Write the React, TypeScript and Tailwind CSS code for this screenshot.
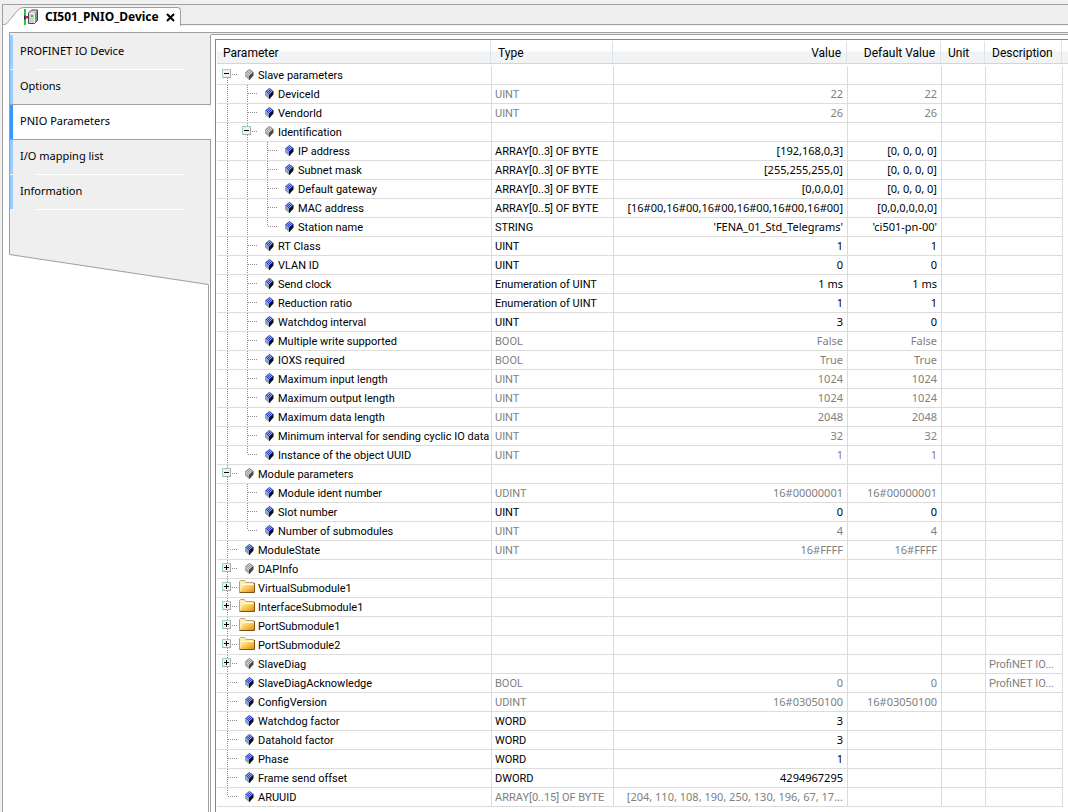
import { useState } from "react";

type Icon = "blue" | "gray" | "folder";

interface Node {
  name: string;
  icon?: Icon;
  type?: string;
  value?: string;
  def?: string;
  description?: string;
  readOnly?: boolean;
  expandable?: boolean;
  children?: Node[];
}

const ro = (name: string, type: string, value: string, def = value): Node => ({ name, type, value, def, readOnly: true });
const rw = (name: string, type: string, value: string, def = value): Node => ({ name, type, value, def });
const folder = (name: string): Node => ({ name, icon: "folder", expandable: true });

const TREE: Node[] = [
  {
    name: "Slave parameters",
    icon: "gray",
    children: [
      ro("DeviceId", "UINT", "22"),
      ro("VendorId", "UINT", "26"),
      {
        name: "Identification",
        icon: "gray",
        children: [
          rw("IP address", "ARRAY[0..3] OF BYTE", "[192,168,0,3]", "[0, 0, 0, 0]"),
          rw("Subnet mask", "ARRAY[0..3] OF BYTE", "[255,255,255,0]", "[0, 0, 0, 0]"),
          rw("Default gateway", "ARRAY[0..3] OF BYTE", "[0,0,0,0]", "[0, 0, 0, 0]"),
          rw("MAC address", "ARRAY[0..5] OF BYTE", "[16#00,16#00,16#00,16#00,16#00,16#00]", "[0,0,0,0,0,0]"),
          rw("Station name", "STRING", "'FENA_01_Std_Telegrams'", "'ci501-pn-00'"),
        ],
      },
      rw("RT Class", "UINT", "1"),
      rw("VLAN ID", "UINT", "0"),
      rw("Send clock", "Enumeration of UINT", "1 ms"),
      rw("Reduction ratio", "Enumeration of UINT", "1"),
      rw("Watchdog interval", "UINT", "3", "0"),
      ro("Multiple write supported", "BOOL", "False"),
      ro("IOXS required", "BOOL", "True"),
      ro("Maximum input length", "UINT", "1024"),
      ro("Maximum output length", "UINT", "1024"),
      ro("Maximum data length", "UINT", "2048"),
      ro("Minimum interval for sending cyclic IO data", "UINT", "32"),
      ro("Instance of the object UUID", "UINT", "1"),
    ],
  },
  {
    name: "Module parameters",
    icon: "gray",
    children: [
      ro("Module ident number", "UDINT", "16#00000001"),
      rw("Slot number", "UINT", "0"),
      ro("Number of submodules", "UINT", "4"),
    ],
  },
  ro("ModuleState", "UINT", "16#FFFF"),
  { name: "DAPInfo", icon: "gray", expandable: true },
  folder("VirtualSubmodule1"),
  folder("InterfaceSubmodule1"),
  folder("PortSubmodule1"),
  folder("PortSubmodule2"),
  { name: "SlaveDiag", icon: "gray", expandable: true, description: "ProfiNET IO...", readOnly: true },
  { ...ro("SlaveDiagAcknowledge", "BOOL", "0"), description: "ProfiNET IO..." },
  ro("ConfigVersion", "UDINT", "16#03050100"),
  rw("Watchdog factor", "WORD", "3", ""),
  rw("Datahold factor", "WORD", "3", ""),
  rw("Phase", "WORD", "1", ""),
  rw("Frame send offset", "DWORD", "4294967295", ""),
  ro("ARUUID", "ARRAY[0..15] OF BYTE", "[204, 110, 108, 190, 250, 130, 196, 67, 17...", ""),
];

const NAV = ["PROFINET IO Device", "Options", "PNIO Parameters", "I/O mapping list", "Information"];

interface Row {
  node: Node;
  path: string;
  /** For every ancestor level: whether its vertical line runs on past this row. */
  lines: boolean[];
  first: boolean;
  last: boolean;
  open: boolean;
}

function flatten(nodes: Node[], closed: Set<string>, lines: boolean[] = [], prefix = ""): Row[] {
  return nodes.flatMap((node, i) => {
    const path = prefix + "/" + node.name;
    const last = i === nodes.length - 1;
    const open = !!node.children && !closed.has(path);
    const row: Row = { node, path, lines, first: i === 0 && prefix === "", last, open };
    return open ? [row, ...flatten(node.children!, closed, [...lines, !last], path)] : [row];
  });
}

function Dots({ d }: { d: string }) {
  return <path d={d} stroke="#8e8e8e" strokeDasharray="1 1" fill="none" shapeRendering="crispEdges" />;
}

function Guide({ on }: { on: boolean }) {
  return (
    <svg width="20" height="18" className="shrink-0" aria-hidden="true">
      {on && <Dots d="M10.5 0V18" />}
    </svg>
  );
}

function Branch({ row }: { row: Row }) {
  const box = !!row.node.children || !!row.node.expandable;
  return (
    <svg width="20" height="18" className="shrink-0" aria-hidden="true">
      {!row.first && <Dots d="M10.5 0V8" />}
      {!row.last && <Dots d="M10.5 8V18" />}
      <Dots d="M11 8.5H20" />
      {box && (
        <g shapeRendering="crispEdges">
          <rect x="5.5" y="3.5" width="8" height="8" fill="#f0f2f1" stroke="#9fd0cd" />
          <path d="M6 11.5H14M13.5 4V12" stroke="#a3adac" />
          <path d="M7 7.5H12" stroke="#000" />
          {!row.open && <path d="M9.5 5V10" stroke="#000" />}
        </g>
      )}
    </svg>
  );
}

function Diamond({ blue }: { blue: boolean }) {
  return (
    <svg width="9" height="11" viewBox="0 0 9 11" aria-hidden="true">
      <path d="M4.500 0L8.500 3.500L4 8L0 4Z" fill={blue ? "#2334d8" : "#929292"} />
      <path d="M0 3.500L4 7V11L0 7.500Z" fill={blue ? "#8ba2bd" : "#a9a9a9"} />
      <path d="M4 7L8.500 3V6.500L4.500 11H4Z" fill={blue ? "#0c0d12" : "#484848"} />
      <path
        d="M4 1.500h1M3 2.500h1M5 2.500h1M2 3.500h1M4 3.500h1M6 3.500h1M1 4.500h1M3 4.500h1M5 4.500h1M2 5.500h1M4 5.500h1M3 6.500h1"
        stroke={blue ? "#94a8f2" : "#dadada"}
        shapeRendering="crispEdges"
      />
      <path d="M0.500 3.500L4.500 0.500L8.500 3.500" stroke={blue ? "#65788f" : "#868686"} fill="none" strokeWidth="0.8" />
    </svg>
  );
}

function Folder() {
  return (
    <svg width="16" height="13" viewBox="0 0 16 13" aria-hidden="true">
      <defs>
        <linearGradient id="folder" x1="0" y1="0" x2="1" y2="1">
          <stop offset="0" stopColor="#fff3b4" />
          <stop offset="0.45" stopColor="#fac95c" />
          <stop offset="1" stopColor="#e08708" />
        </linearGradient>
      </defs>
      <path d="M0.500 12V1.500L1.500 0.500H5.500L7 2.500H14.500V12Z" fill="#fdeeb0" stroke="#c2a266" />
      <path d="M1 12.500L3.500 4.500H15.500V12.500Z" fill="url(#folder)" />
      <path d="M0.500 12.500H15.500V3" fill="none" stroke="#7a5518" />
      <path d="M2.500 4.500H15" stroke="#fffbe2" />
    </svg>
  );
}

function NodeIcon({ icon = "blue" }: { icon?: Icon }) {
  return icon === "folder" ? (
    <span className="flex w-5 shrink-0 pb-[3px] pl-[2px]">
      <Folder />
    </span>
  ) : (
    <span className="flex w-5 shrink-0 pb-px pl-2">
      <Diamond blue={icon === "blue"} />
    </span>
  );
}

function DeviceIcon() {
  return (
    <svg width="16" height="16" viewBox="0 0 16 16" aria-hidden="true">
      <path d="M0 0H2V16H0Z" fill="#1fc93f" />
      <path d="M-1 6.500H1L2 7.500V9.500L1 10.500H-1Z" fill="#2a2a2a" />
      <path d="M1 7H5V9.500H1Z" fill="#c8148c" />
      <path d="M4.500 4L7.500 1H13.500V11.500L10.500 14.500H4.500Z" fill="#cfcfcf" stroke="#4a4a4a" />
      <path d="M11 4L13 2V11.300L11 13.500Z" fill="#8b8b8b" />
      <path d="M5 4.500H10.500V14" fill="none" stroke="#f0f0f0" />
      <path d="M7 6H9V8H7Z" fill="#17d62f" />
    </svg>
  );
}

function TabBar() {
  return (
    <div className="flex h-[22px] items-stretch border-l border-t border-[#a0a0a0] bg-[#efefef]">
      <svg width="21" height="21" className="shrink-0" aria-hidden="true">
        <path d="M0 20L3 19L15 5Q17 2.500 21 2.500V21H0Z" fill="#fff" />
        <path d="M0 19.500H1.500Q3 19.500 4.500 17.500L14.500 5.500Q17 2.500 21 2.500" fill="none" stroke="#a0a0a0" />
      </svg>
      <div className="flex flex-col pt-[2px]">
        <div className="flex flex-1 items-center rounded-tr-sm border-r border-t border-[#a0a0a0] bg-white pr-[3px]">
          <DeviceIcon />
          <span className="pl-[5px] font-['Noto_Sans',sans-serif] text-xs font-bold leading-4">CI501_PNIO_Device</span>
          <button type="button" aria-label="Close" className="ml-[6px] flex h-3 w-3 items-center justify-center">
            <svg width="9" height="9" viewBox="0 0 9 9" aria-hidden="true">
              <path d="M1 1L8 8M8 1L1 8" stroke="#000" strokeWidth="2" />
            </svg>
          </button>
        </div>
      </div>
      <div className="mb-px flex-1 border-b border-[#a0a0a0]" />
    </div>
  );
}

function Sidebar({ active, onSelect }: { active: number; onSelect: (i: number) => void }) {
  return (
    <nav className="flex w-[202px] shrink-0 flex-col font-['Noto_Sans',sans-serif] text-[11px]">
      <div className="border-l border-[#a0a0a0] bg-[#efefef] pt-[2px]">
        {NAV.map((label, i) => {
          const on = i === active;
          const line = on || i + 1 === active;
          return (
            <button
              key={label}
              type="button"
              onClick={() => onSelect(i)}
              className={
                "relative flex h-[35px] w-full items-stretch text-left " +
                (on ? "bg-white " : "border-r border-[#a0a0a0] ") +
                (line ? "border-b border-b-[#a0a0a0]" : "")
              }
            >
              <span className={"w-[3px] " + (on ? "bg-[#3399ff]" : "bg-[#99ccff]") + (line ? "" : " mb-px")} />
              <span className={"flex flex-1 items-center pl-[7px] " + (line ? "pb-px" : "pb-[2px]")}>{label}</span>
              {!line && <span className="absolute bottom-0 left-[25px] right-[25px] h-px bg-white" />}
            </button>
          );
        })}
      </div>
      <svg width="202" height="75" className="shrink-0" aria-hidden="true">
        <path d="M0.500 0V45L198.500 75H201V0Z" fill="#efefef" />
        <path d="M0.500 0V44.500L199.500 74.500M201.500 0V75" fill="none" stroke="#a0a0a0" />
      </svg>
      <div className="flex flex-1 justify-end">
        <div className="w-[3px] border-x border-[#a0a0a0]" />
      </div>
    </nav>
  );
}

const HEADERS = [
  { label: "Parameter", right: false },
  { label: "Type", right: false },
  { label: "Value", right: true },
  { label: "Default Value", right: true },
  { label: "Unit", right: false },
  { label: "Description", right: false },
];

const CELL = "h-[19px] overflow-hidden whitespace-nowrap border-b border-r border-[#dcdcdc] py-0 ";
const NUMERIC = "px-1 text-right font-['Noto_Sans',sans-serif] ";

function ParameterTable() {
  const [closed, setClosed] = useState<Set<string>>(new Set());
  const rows = flatten(TREE, closed);
  const toggle = (path: string) =>
    setClosed((prev) => {
      const next = new Set(prev);
      if (!next.delete(path)) next.add(path);
      return next;
    });

  return (
    <table className="w-full table-fixed border-separate border-spacing-0 font-['Roboto',sans-serif] text-[11px] leading-[18px]">
      <colgroup>
        <col className="w-[275px]" />
        <col className="w-[122px]" />
        <col className="w-[234px]" />
        <col className="w-[94px]" />
        <col className="w-[44px]" />
        <col className="w-[77px]" />
        <col />
      </colgroup>
      <thead>
        <tr>
          {HEADERS.map(({ label, right }) => (
            <th key={label} scope="col" className="p-0 pb-[2px] text-xs font-normal">
              <div className="h-[23px] border-b border-[#d5d5d5] bg-linear-to-b from-white from-45% to-[#f1f3f5] to-50%">
                <div className={"mr-px h-[22px] border-r border-[#e0e3e6] pl-[6px] pr-[5px] leading-6 " + (right ? "text-right" : "text-left")}>
                  {label}
                </div>
              </div>
            </th>
          ))}
          <td className="p-0 pb-[2px]">
            <div className="h-[23px] border-b border-[#d5d5d5] bg-linear-to-b from-white from-45% to-[#f1f3f5] to-50%" />
          </td>
        </tr>
      </thead>
      <tbody>
        {rows.map((row) => {
          const { node, path, lines } = row;
          const tone = node.readOnly ? "text-[#808080] " : "text-black ";
          return (
            <tr key={path}>
              <td className={CELL + "pl-0 pr-0"}>
                <div className="flex h-[18px] items-center">
                  {lines.map((on, i) => (
                    <Guide key={i} on={on} />
                  ))}
                  {node.children || node.expandable ? (
                    <button type="button" aria-label={node.name} aria-expanded={row.open} onClick={() => toggle(path)}>
                      <Branch row={row} />
                    </button>
                  ) : (
                    <Branch row={row} />
                  )}
                  <NodeIcon icon={node.icon} />
                  <span className="h-[18px] pl-px leading-5">{node.name}</span>
                </div>
              </td>
              <td className={CELL + tone + "px-[3px]"}>
                <div className="h-[18px] leading-5">{node.type}</div>
              </td>
              <td className={CELL + NUMERIC + tone}>{node.value}</td>
              <td className={CELL + NUMERIC + tone}>{node.def}</td>
              <td className={CELL} />
              <td className={CELL + tone + "px-[3px]"}>
                <div className="h-[18px] leading-5">{node.description}</div>
              </td>
              <td className="p-0" />
            </tr>
          );
        })}
      </tbody>
    </table>
  );
}

export default function App() {
  const [active, setActive] = useState(2);
  return (
    <div className="flex min-h-screen flex-col bg-[#f0f0f0] pl-[2px] pt-1 text-black">
      <TabBar />
      <div className="flex flex-1 flex-col border-l border-[#a0a0a0] bg-white pl-[6px] pt-[6px]">
        <div className="flex flex-1 border-t border-[#a0a0a0]">
          <Sidebar active={active} onSelect={setActive} />
          <main className="flex min-w-0 flex-1 flex-col bg-[#efefef] pt-px">
            <div className="flex flex-1 flex-col border-t border-[#a0a0a0] bg-white pl-1 pt-1">
              <div className="flex-1 border-l border-t border-[#828790] pl-px pt-px">
                <ParameterTable />
              </div>
            </div>
          </main>
        </div>
      </div>
    </div>
  );
}
